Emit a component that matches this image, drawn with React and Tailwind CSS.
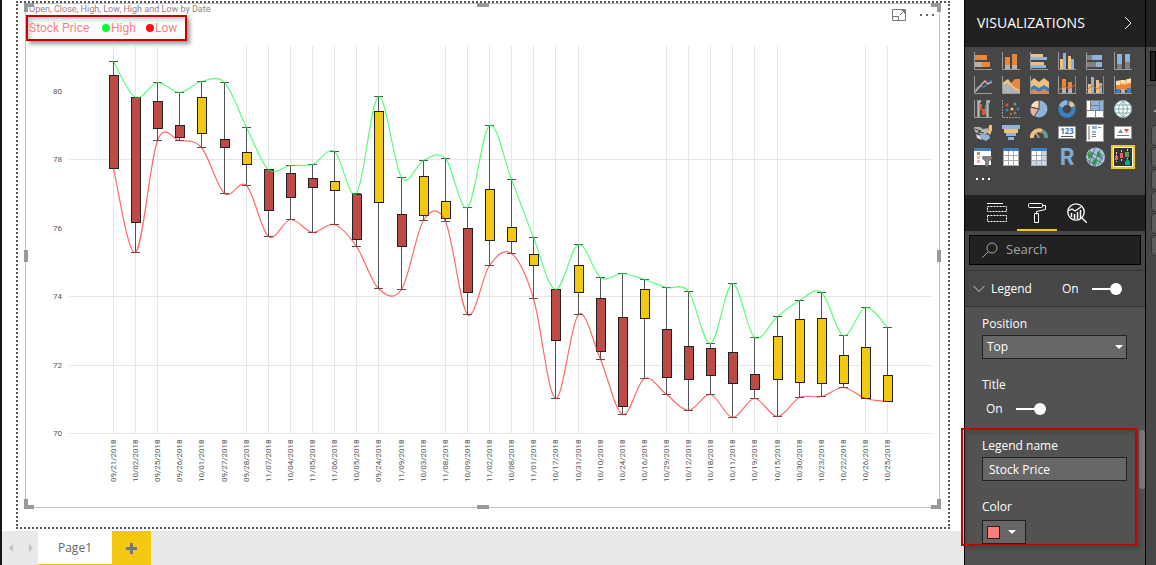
import { Fragment } from 'react'

// [date, high, low, body top, body bottom, rising]
const CANDLES = [
  ['09/21/2018', 61, 168, 75, 168, false],
  ['10/02/2018', 97, 252, 97, 222, false],
  ['09/25/2018', 82, 140, 101, 128, false],
  ['09/26/2018', 92, 140, 125, 137, false],
  ['10/01/2018', 81, 147, 97, 133, true],
  ['09/27/2018', 82, 193, 139, 147, false],
  ['09/28/2018', 127, 185, 152, 164, true],
  ['11/07/2018', 169, 236, 169, 210, false],
  ['10/04/2018', 165, 219, 173, 197, false],
  ['11/05/2018', 164, 232, 178, 187, false],
  ['11/06/2018', 151, 224, 181, 190, true],
  ['10/05/2018', 193, 246, 194, 239, false],
  ['09/24/2018', 96, 288, 111, 202, true],
  ['11/09/2018', 177, 289, 214, 246, false],
  ['10/03/2018', 160, 220, 176, 215, true],
  ['11/08/2018', 158, 221, 201, 218, true],
  ['10/09/2018', 207, 314, 228, 292, false],
  ['11/02/2018', 125, 265, 189, 240, true],
  ['10/08/2018', 179, 253, 227, 241, true],
  ['11/01/2018', 237, 298, 254, 265, true],
  ['10/17/2018', 289, 398, 289, 340, false],
  ['10/31/2018', 244, 314, 265, 292, true],
  ['10/10/2018', 277, 359, 298, 351, false],
  ['10/24/2018', 273, 414, 317, 406, false],
  ['10/16/2018', 279, 378, 289, 318, true],
  ['10/29/2018', 287, 394, 329, 377, false],
  ['10/12/2018', 291, 410, 346, 379, false],
  ['10/18/2018', 343, 394, 348, 375, false],
  ['10/11/2018', 283, 417, 352, 383, false],
  ['10/19/2018', 337, 398, 374, 389, false],
  ['10/15/2018', 316, 416, 336, 379, true],
  ['10/30/2018', 300, 397, 319, 382, true],
  ['10/23/2018', 292, 396, 318, 383, true],
  ['10/22/2018', 335, 387, 355, 383, true],
  ['10/26/2018', 307, 398, 347, 398, true],
  ['10/25/2018', 327, 401, 375, 401, true],
]

const Y_TICKS = [[80, 91], [78, 159], [76, 228], [74, 296], [72, 365], [70, 433]]
const GRID_ROWS = [159, 296, 365, 433]
const NO_GRID = [3, 4, 5, 13, 14, 22, 23, 24, 31, 32, 33]

const xAt = (i) => Math.round(113 + i * 22.12)

function curve(column) {
  const pts = CANDLES.map((c, i) => [xAt(i) + 0.5, c[column] + 0.5])
  let d = `M${pts[0]}`
  for (let i = 0; i < pts.length - 1; i++) {
    const a = pts[i - 1] || pts[i]
    const b = pts[i]
    const c = pts[i + 1]
    const e = pts[i + 2] || c
    d += `C${b[0] + (c[0] - a[0]) / 6},${b[1] + (c[1] - a[1]) / 6} ${c[0] - (e[0] - b[0]) / 6},${c[1] - (e[1] - b[1]) / 6} ${c}`
  }
  return d
}

function CandleChart() {
  return (
    <svg viewBox="26 42 913 448" className="block w-full font-['Roboto',sans-serif]" role="img" aria-label="Stock price by date">
      <g fill="#e6e6e6">
        {GRID_ROWS.map((y) => <rect key={y} x="69" y={y} width="863" height="1" />)}
        {CANDLES.map((c, i) => !NO_GRID.includes(i) && <rect key={i} x={xAt(i)} y="46" width="1" height="387" />)}
      </g>
      <g fill="#555" fontSize="8" textAnchor="end">
        {Y_TICKS.map(([label, y]) => <text key={label} x="62" y={y + 3}>{label}</text>)}
      </g>
      {CANDLES.map(([date, high, low, top, bottom, up], i) => {
        const x = xAt(i)
        return (
          <Fragment key={date}>
            <g fill="#505558">
              <rect x={x} y={high} width="1" height={low - high} />
              <rect x={x - 4} y={high} width="9" height="1" />
              <rect x={x - 4} y={low} width="9" height="1" />
            </g>
            <rect x={x - 3.5} y={top + 0.5} width="9" height={bottom - top} fill={up ? '#f2c811' : '#bd4a46'} stroke="#222" />
            <text transform={`translate(${x + 3} 482) rotate(-90)`} fill="#555" fontSize="8">{date}</text>
          </Fragment>
        )
      })}
      <path d={curve(1)} fill="none" stroke="#00ff33" strokeOpacity=".65" strokeWidth="1.2" />
      <path d={curve(2)} fill="none" stroke="#ff1919" strokeOpacity=".65" strokeWidth="1.2" />
    </svg>
  )
}

const O = '#e8873a'
const G = '#b3b3b3'
const D = '#808080'
const B = '#8fb3d9'
const K = '#3f7fc1'
const S = '#edc27c'
const P = '#e6b0a4'

const Axes = () => <path d="M.5 0v17.5H18" fill="none" stroke="#9a9a9a" />

// each rect is [x, y, width, height, fill]
const Rects = ({ of }) => of.map(([x, y, w, h, fill], i) => <rect key={i} x={x} y={y} width={w} height={h} fill={fill} />)

const VISUALS = [
  ['Stacked bar chart', <><Rects of={[[1, 3, 5, 5, O], [5, 3, 8, 5, O], [1, 10, 7, 5, G], [8, 10, 8, 5, O]]} /><Axes /></>],
  ['Stacked column chart', <><Rects of={[[3, 5, 5, 8, O], [3, 13, 5, 4, G], [10, 2, 5, 11, O], [10, 13, 5, 4, G]]} /><Axes /></>],
  ['Clustered bar chart', <><Rects of={[[1, 2, 12, 3, S], [1, 5, 16, 3, B], [1, 10, 13, 3, S], [1, 13, 15, 3, B]]} /><Axes /></>],
  ['Clustered column chart', <><Rects of={[[2, 7, 3, 10, S], [5, 1, 3, 16, B], [10, 4, 3, 13, S], [13, 7, 3, 10, B]]} /><Axes /></>],
  ['100% stacked bar chart', <><Rects of={[[1, 3, 5, 5, D], [6, 3, 10, 5, B], [1, 10, 9, 5, D], [10, 10, 6, 5, B]]} /><Axes /></>],
  ['100% stacked column chart', <><Rects of={[[3, 2, 5, 10, B], [3, 12, 5, 5, D], [11, 2, 5, 8, B], [11, 10, 5, 7, D]]} /><Axes /></>],
  ['Line chart', <><path d="M1 13l5-3 4 1 8-7" fill="none" stroke={K} strokeWidth="1.4" /><path d="M1 16l7-8 3-3 3 3 4-2" fill="none" stroke={P} strokeWidth="1.3" /><Axes /></>],
  ['Area chart', <><path d="M4 9l5-2 4-4h5v14H4z" fill={O} /><path d="M0 7l6-4 6 8 6 3v3H0z" fill={S} /><path d="M0 9l5-2 4 3 4 4 5 1v2H0z" fill={G} /><Axes /></>],
  ['Stacked area chart', <><path d="M0 6l4-4 5 4 5-4 5 4v12H0z" fill={S} /><path d="M0 12l4-3 5 3 5-3 5 3v6H0z" fill={K} /><path d="M0 16l4-3 5 3 5-3 5 3v2H0z" fill={O} /><Axes /></>],
  ['Line and stacked column chart', <><Rects of={[[4, 3, 4, 9, O], [4, 12, 4, 5, G], [10, 6, 4, 6, O], [10, 12, 4, 5, G]]} /><path d="M1 14l5-4 5 3 6-4M17.5 0v18" fill="none" stroke="#e8653a" /><Axes /></>],
  ['Line and clustered column chart', <><Rects of={[[2, 8, 3, 9, S], [5, 1, 3, 16, B], [10, 4, 3, 13, S], [13, 7, 3, 10, B]]} /><path d="M1 14l5-4 5 3 6-4M17.5 0v18" fill="none" stroke="#e8653a" /><Axes /></>],
  ['Ribbon chart', <><path d="M2 5l5-1 4 0 6-2v5l-6 3-4-1H2z" fill={S} /><path d="M2 9l5-1 4 1 6-3v7l-6 1H2z" fill={O} /><Rects of={[[2, 5, 4, 4, '#fae3b7'], [2, 13, 4, 4, K], [7, 4, 4, 3, '#fae3b7'], [7, 13, 4, 4, G], [13, 3, 4, 4, '#fae3b7'], [13, 12, 4, 5, K]]} /><Axes /></>],
  ['Waterfall chart', <><path d="M4.500 17V1.500H7M16 1.500h-2.500V17" fill="none" stroke={G} strokeWidth="2.500" /><Rects of={[[6, 4, 2, 6, '#d9583b'], [8, 9, 3, 6, '#d9583b'], [11, 5, 2, 9, '#679b8a']]} /><Axes /></>],
  ['Scatter chart', <><g fill="#d9583b"><circle cx="5" cy="5" r="1.5" /><circle cx="9" cy="14" r="1.2" /></g><g fill={K}><circle cx="5" cy="10" r="1.5" /><circle cx="16" cy="9" r="1.5" /></g><circle cx="10" cy="9" r="1.6" fill={S} /><circle cx="13" cy="4" r="1.5" fill="#679b8a" /><circle cx="13" cy="13" r="1.4" fill={D} /><path d="M.5 0v17.5H18" fill="none" stroke="#9a9a9a" strokeDasharray="2 1" /></>],
  ['Pie chart', <><circle cx="9" cy="9" r="8.5" fill={B} /><path d="M9 9V0A9 9 0 0 0 .3 7z" fill="#fae3b7" stroke="#464646" /><path d="M9 9 .3 7A9 9 0 0 0 4 17z" fill={P} stroke="#464646" /></>],
  ['Donut chart', <><circle cx="9" cy="9" r="6.5" fill="none" stroke={K} strokeWidth="4.5" /><path d="M9 2.500A6.5 6.5 0 0 0 3 6.500" fill="none" stroke={B} strokeWidth="4.500" /><path d="M11.500 3A6.5 6.5 0 0 1 15 6.500" fill="none" stroke={S} strokeWidth="4.5" /></>],
  ['Treemap', <><rect width="18" height="18" fill="#fff" /><Rects of={[[5, 1, 8, 4, B], [5, 6, 8, 4, B], [14, 1, 3, 9, B]]} /><path d="M.5.5h17v17H.5zM4.500 0v11M13.500 0v11M0 10.500h18M9.500 11v7M5 5.500h8" fill="none" stroke="#808080" /></>],
  ['Map', <><circle cx="9" cy="9" r="8.500" fill="#fff" stroke="#8fb3d9" /><path d="M9 1v16M1 9h16M2 5h14M2 13h14M9 1C3 6 3 12 9 17M9 1c6 5 6 11 0 16" fill="none" stroke="#679b8a" strokeWidth=".8" /></>],
  ['Filled map', <><path d="M0 3h6l3 2 5-1v5l-5 2-3-1-5-2z" fill={G} /><path d="M1 5l6 2-3 1 6 1" stroke="#444" fill="none" /><path d="M15 1h3v5l-2 5-2-2z" fill={S} /><path d="M5 11l5-1 5 1 1 3-4 3-4-2z" fill={B} /><path d="M2 10l4 2 2 4-5-2z" fill="#ddd" /></>],
  ['Funnel', <Rects of={[[0, 1, 18, 4, B], [2, 5, 14, 4, S], [4, 9, 10, 3, B], [6, 13, 6, 3, B]]} />],
  ['Gauge', <><path d="M2 14a7 7 0 0 1 10-7" fill="none" stroke={S} strokeWidth="4" /><path d="M12 7a7 7 0 0 1 4 7" fill="none" stroke="#679b8a" strokeWidth="4" /><path d="M9 14 6 9" stroke="#999" strokeWidth="2" /></>],
  ['Card', <><rect x=".5" y="2.500" width="17" height="12" fill="#fff" stroke="#999" /><text x="9" y="10" fontSize="8" fontWeight="700" fill="#4a78a8" textAnchor="middle">123</text><path d="M3 12.500h12" stroke="#555" /></>],
  ['Multi-row card', <><rect x=".5" y=".5" width="17" height="17" fill="#fff" stroke="#999" /><Rects of={[[2, 2, 2, 14, G], [6, 2, 5, 3, B], [6, 7, 4, 2, B], [12, 3, 3, 1, D], [6, 10, 4, 1, D], [6, 12, 4, 1, D]]} /></>],
  ['KPI', <><rect x=".5" y="2.500" width="17" height="12" fill="#fff" stroke="#999" /><path d="M4 9l2.500-4 2.500 4z" fill="#679b8a" /><path d="M10 5h5l-2.500 4z" fill="#d9583b" /><path d="M3 11.500h12" stroke="#777" /></>],
  ['Slicer', <><rect y="1" width="17" height="16" fill="#fff" /><Rects of={[[0, 0, 17, 3, K], [3, 4, 3, 3, O], [3, 8, 3, 3, S], [3, 12, 3, 3, P]]} /><path d="M8.500 8.500h10v2l-4 3v5h-3v-5l-3-3z" fill="#808080" stroke="#464646" strokeWidth=".5" /></>],
  ['Table', <><rect x="1" y="1" width="16" height="17" fill="#fff" /><path d="M1.500 2v15.500h15V2M6.500 3v14M11.500 3v14M1 7.500h16M1 12.500h16" fill="none" stroke="#aaa" /><rect x="1" width="16" height="3" fill={K} /></>],
  ['Matrix', <><rect x="1" y="1" width="16" height="17" fill="#fff" /><Rects of={[[12, 3, 5, 15, '#c5d9ee'], [1, 13, 16, 4, '#c5d9ee']]} /><path d="M1.500 2v15.500h15V2M6.500 3v14M11.500 3v14M1 7.500h16M1 12.500h16" fill="none" stroke="#aaa" /><rect x="1" width="16" height="3" fill={K} /></>],
  ['R script visual', <text x="9" y="17" fontSize="23" fontWeight="700" fill="#7fa9d6" textAnchor="middle" className="font-['Roboto',sans-serif]">R</text>],
  ['ArcGIS map', <><circle cx="9.500" cy="9" r="9.500" fill="#a8c4dc" /><path d="M2 4l5 1-1 4-4 2zM11 3l5 3-2 4-3-2zM7 11l5 1-2 5-4-2z" fill="#3fa04d" /><path d="M1 6l15 9M3 3l14 8M9 0 3 16M14 2 7 18M17 7l-5 10M0 11l10 7" fill="none" stroke="#465e70" strokeWidth=".8" /></>],
  ['Candlestick chart', <><path d="M2.500 4v10M7.500 2v12M13.500 1v10" stroke="#ddd" strokeDasharray="2 1" /><Rects of={[[1, 8, 3, 4, '#f45b5b'], [6, 5, 3, 5, '#f45b5b'], [11, 4, 4, 5, '#5a9e4b']]} /><path d="M11 17v-3l2.500-3 2.500 3v3z" fill="#00b294" /></>],
]

function VisualGrid() {
  return (
    <div className="h-37 bg-[#464646] pt-[5px] pl-[9px]">
      <div className="grid w-[168px] grid-cols-6">
        {VISUALS.map(([name, art]) => (
          <button key={name} type="button" aria-label={name} className="flex h-6 items-start">
            <svg viewBox="0 0 18 18" className={`size-[18px] overflow-visible ${name.startsWith('Candle') ? 'bg-[#333] outline-2 outline-offset-1 outline-[#f2c811] ring-1 ring-white' : ''}`}>
              {art}
            </svg>
          </button>
        ))}
      </div>
      <button type="button" aria-label="More visuals" className="mt-[6px] ml-[2px] flex gap-1">
        <i className="size-[2px] bg-white" />
        <i className="size-[2px] bg-white" />
        <i className="size-[2px] bg-white" />
      </button>
    </div>
  )
}

function Toggle({ label }) {
  return (
    <input
      type="checkbox"
      defaultChecked
      aria-label={label}
      className="relative h-3 w-[30px] appearance-none before:absolute before:top-[5px] before:left-0 before:h-[2px] before:w-6 before:bg-white after:absolute after:right-0 after:size-3 after:rounded-full after:bg-white"
    />
  )
}

function PaneTabs() {
  return (
    <div className="flex h-9 bg-[#212121] pl-3 text-white">
      <button type="button" aria-label="Fields" className="flex w-10 justify-center pt-2">
        <svg viewBox="0 0 20 20" className="size-5" fill="none" stroke="currentColor">
          <path d="M0 .5h16" />
          <path d="M.5 3.500h19v5H.5zM.5 12.500h19v6H.5z" strokeDasharray="2 1" />
        </svg>
      </button>
      <button type="button" aria-label="Format" className="flex w-10 justify-center border-b-2 border-[#f2c811] pt-2">
        <svg viewBox="0 0 20 20" className="size-5" fill="none" stroke="currentColor">
          <rect x="1.500" y=".5" width="14" height="4" rx="1" />
          <path d="M15.500 2.500h3v4l-9 2v3M7.500 10.500h4v9h-4z" />
        </svg>
      </button>
      <button type="button" aria-label="Analytics" className="flex w-10 justify-center pt-2">
        <svg viewBox="0 0 20 20" className="size-5" fill="none" stroke="currentColor">
          <circle cx="9" cy="9" r="8.200" strokeWidth="1.300" />
          <path d="M1 8l4-2 3 2 6-4M15 15l5 5" strokeWidth="1.300" />
          <path d="M4.500 10v4M7.500 11v5M10.500 9v7M13.500 7v8" strokeWidth="1.500" />
        </svg>
      </button>
    </div>
  )
}

function FormatPane() {
  return (
    <aside className="relative flex w-[182px] shrink-0 flex-col border-x border-black bg-[#525252] text-xs text-white">
      <header className="flex h-[47px] shrink-0 items-center justify-between bg-[#212121] pr-[13px] pb-px pl-3">
        <h2 className="text-sm">VISUALIZATIONS</h2>
        <svg viewBox="0 0 8 14" className="h-[14px] w-2" fill="none" stroke="currentColor">
          <path d="M1 1l6 6-6 6" />
        </svg>
      </header>
      <VisualGrid />
      <PaneTabs />
      <div className="bg-[#464646] px-1 pt-1 pb-[5px]">
        <label className="flex h-[30px] items-center gap-2 border border-black bg-[#212121] pl-3 text-[#a6a6a6]">
          <svg viewBox="0 0 16 16" className="size-4" fill="none" stroke="currentColor">
            <circle cx="10" cy="6" r="5" />
            <path d="M6.500 9.500.5 15.500" />
          </svg>
          <input type="text" placeholder="Search" aria-label="Search" className="w-24 text-[13px] outline-none placeholder:text-[#a6a6a6]" />
        </label>
      </div>
      <div className="flex h-[37px] shrink-0 items-center border-y border-[#363636] bg-[#464646] pl-2">
        <button type="button" className="flex w-[89px] items-center gap-[6px]">
          <svg viewBox="0 0 12 8" className="h-2 w-3" fill="none" stroke="#ccc">
            <path d="M.5 1 6 6.500 11.500 1" />
          </svg>
          Legend
        </button>
        <span className="w-[30px]">On</span>
        <Toggle label="Legend" />
      </div>
      <div className="flex flex-col pr-[18px] pl-[17px]">
        <label htmlFor="position" className="pt-[7px] pb-px leading-5">Position</label>
        <span className="relative flex">
          <select id="position" className="h-6 w-full appearance-none border border-[#222] bg-[#666] px-1">
            <option>Top</option>
          </select>
          <i className="pointer-events-none absolute top-[10px] right-1 border-x-4 border-t-4 border-x-transparent border-t-white" />
        </span>
        <span className="pt-4 leading-5">Title</span>
        <span className="flex h-7 items-center pl-1">
          <span className="w-[30px]">On</span>
          <Toggle label="Title" />
        </span>
        <label htmlFor="legend-name" className="pt-[13px] pb-px leading-5">Legend name</label>
        <input id="legend-name" type="text" defaultValue="Stock Price" className="h-6 w-full border border-[#222] bg-[#666] px-[6px] outline-none" />
        <span className="pt-4 pb-[3px] leading-5">Color</span>
        <button type="button" aria-label="Color" className="flex h-6 w-11 items-center gap-2 border border-[#222] bg-[#666] pl-1">
          <i className="size-[13px] border border-[#222] bg-[#fd7f7c]" />
          <i className="border-x-4 border-t-4 border-x-transparent border-t-white" />
        </button>
      </div>
      <div className="absolute top-[430px] right-0 h-[59px] w-[6px] rounded-full bg-[#7b7b7b]" />
      <div className="pointer-events-none absolute top-[428px] -left-1 h-[118px] w-[176px] border-2 border-[#c80000] shadow-[3px_3px_4px_rgba(0,0,0,0.15),inset_3px_3px_4px_rgba(0,0,0,0.15)]" />
    </aside>
  )
}

function FieldsEdge() {
  return (
    <aside className="flex w-[10px] shrink-0 flex-col overflow-hidden bg-[#464646]">
      <div className="h-[47px] shrink-0 bg-[#212121]" />
      <div className="mt-1 ml-1 h-[30px] shrink-0 border border-black bg-[#212121]" />
      <div className="mt-1 h-px shrink-0 bg-[#333]" />
      <i className="mt-[22px] ml-[7px] size-0 shrink-0 border-b-4 border-l-4 border-b-[#999] border-l-transparent" />
      <div className="mt-[13px] ml-[5px] flex flex-col gap-px">
        {[0, 1, 2, 3, 4, 5].map((n) => (
          <div key={n} className="h-[21px] w-5 rounded-sm border border-[#333] bg-[#5c5c5c]" />
        ))}
      </div>
    </aside>
  )
}

const HANDLES = [
  '-top-px -left-[2px] h-[9px] w-[10px] border-t-4 border-l-4',
  '-top-px -right-[2px] h-[9px] w-[10px] border-t-4 border-r-4',
  '-bottom-[2px] -left-[2px] h-[10px] w-[10px] border-b-4 border-l-4',
  '-bottom-[2px] -right-[2px] h-[10px] w-[10px] border-b-4 border-r-4',
  '-top-px left-1/2 -ml-[6px] h-1 w-3 border-2',
  '-bottom-[2px] left-1/2 -ml-[6px] h-1 w-3 border-2',
  'top-1/2 -left-[2px] -mt-[6px] h-3 w-1 border-2',
  'top-1/2 -right-[2px] -mt-[6px] h-3 w-1 border-2',
]

function StockVisual() {
  return (
    <section className="relative border border-[#c0c0c0] pb-[17px] font-['Roboto',sans-serif]">
      {HANDLES.map((h) => <i key={h} className={`absolute border-[#999] ${h}`} />)}
      <div className="flex h-[38px] justify-between">
        <div>
          <h1 className="h-[11px] pl-[3px] text-[9px] leading-[10px] text-[#888]">Open, Close, High, Low, High and Low by Date</h1>
          <div className="flex h-[26px] w-[161px] items-center border-2 border-[#c80000] pl-px text-xs text-[#fd7f7c] shadow-[3px_3px_4px_rgba(0,0,0,0.4),inset_3px_3px_4px_rgba(0,0,0,0.2)]">
            <span className="w-[73px]">Stock Price</span>
            <i className="mr-px size-2 rounded-full bg-[#00ff33]" />
            <span className="w-[35px]">High</span>
            <i className="mr-px size-2 rounded-full bg-[#ff1010]" />
            <span>Low</span>
          </div>
        </div>
        <div className="flex items-start gap-[14px] pt-[5px] pr-[5px]">
          <button type="button" aria-label="Focus mode">
            <svg viewBox="0 0 14 12" className="h-3 w-[14px]" fill="none" stroke="#777">
              <path d="M.5.5h13v11H.5zM.5 7.500h6v4M8 6l5-5M9.500 1.500h3v3" />
            </svg>
          </button>
          <button type="button" aria-label="More options" className="mt-[5px] flex gap-1">
            <i className="size-[2px] bg-[#666]" />
            <i className="size-[2px] bg-[#666]" />
            <i className="size-[2px] bg-[#666]" />
          </button>
        </div>
      </div>
      <CandleChart />
    </section>
  )
}

function PageBar() {
  return (
    <footer className="flex h-[34px] shrink-0 bg-[#e9e9e9] text-[#666]">
      <div className="flex w-9 items-center justify-between pr-[5px] pl-[7px]">
        <i className="border-y-4 border-r-4 border-y-transparent border-r-[#c4c4c4]" />
        <i className="border-y-4 border-l-4 border-y-transparent border-l-[#c4c4c4]" />
      </div>
      <button type="button" className="w-[74px] border-b border-[#f2c811] bg-white pt-px text-xs">Page1</button>
      <button type="button" aria-label="New page" className="flex w-[39px] items-center justify-center bg-[#f2c811]">
        <svg viewBox="0 0 11 11" className="size-[11px]" stroke="#777" strokeWidth="3">
          <path d="M5.500 0v11M0 5.500h11" />
        </svg>
      </button>
    </footer>
  )
}

export default function App() {
  return (
    <div className="flex h-screen overflow-hidden bg-white font-['Open_Sans',sans-serif]">
      <div className="w-[2px] shrink-0 bg-[#161616]" />
      <main className="flex min-w-0 flex-1 flex-col">
        <div className="min-h-0 flex-1 overflow-hidden pt-px pr-[14px] pl-[14px]">
          <div className="border-2 border-dotted border-[#555] pr-2 pb-[19px] pl-[7px]">
            <StockVisual />
          </div>
        </div>
        <PageBar />
      </main>
      <FormatPane />
      <FieldsEdge />
    </div>
  )
}
